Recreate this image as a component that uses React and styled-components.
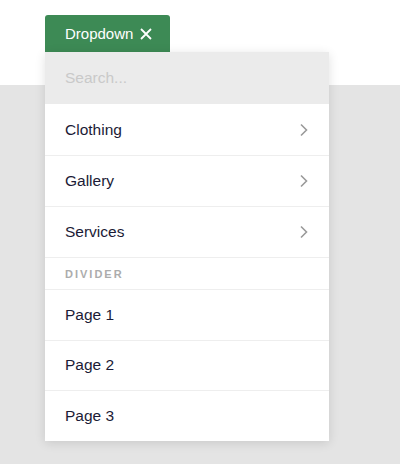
import React from 'react';
import styled, { createGlobalStyle } from 'styled-components';

const GlobalStyle = createGlobalStyle`
  html, body {
    margin: 0;
    padding: 0;
    background: #ffffff;
    font-family: "Liberation Sans", Arial, Helvetica, sans-serif;
  }
`;

const Page = styled.div`
  width: 400px;
  height: 464px;
  position: relative;
  overflow: hidden;
  background: linear-gradient(#ffffff 0, #ffffff 85px, #e4e4e4 85px);
`;

const Wrap = styled.div`
  padding: 15px 0 0 45px;
  display: flex;
  flex-direction: column;
  align-items: flex-start;
`;

const Toggle = styled.button`
  height: 37px;
  padding: 0 18px 0 20px;
  border: none;
  border-radius: 3px 3px 0 0;
  background: #3d8a55;
  color: #ffffff;
  font-family: "Liberation Sans", Arial, sans-serif;
  font-size: 15px;
  display: flex;
  align-items: center;
  gap: 7px;
  cursor: pointer;
`;

const Menu = styled.div`
  width: 284px;
  background: #ffffff;
  box-shadow: 0 2px 10px rgba(0, 0, 0, 0.12);
  display: flex;
  flex-direction: column;
`;

const Search = styled.input`
  height: 52px;
  box-sizing: border-box;
  border: none;
  outline: none;
  background: #ebebeb;
  padding: 0 20px;
  font-family: "Liberation Sans", Arial, sans-serif;
  font-size: 15.5px;
  color: #333;

  &::placeholder {
    color: #c9c9c9;
  }
`;

const Item = styled.div`
  height: ${(p) => (p.$short ? '50.5px' : '51px')};
  box-sizing: border-box;
  padding: 0 20px;
  display: flex;
  align-items: center;
  justify-content: space-between;
  font-size: 15.5px;
  color: #1b1b36;
  border-top: ${(p) => (p.$first ? 'none' : '1px solid #eeeeee')};
`;

const Divider = styled.div`
  height: 32px;
  box-sizing: border-box;
  padding: 0 20px;
  display: flex;
  align-items: center;
  border-top: 1px solid #eeeeee;
  font-size: 11px;
  font-weight: 700;
  letter-spacing: 2px;
  color: #acacac;
`;

const Chevron = () => (
  <svg width="10" height="14" viewBox="0 0 10 14" fill="none">
    <path d="M2 1.5 L7.5 7 L2 12.5" stroke="#9a9a9a" strokeWidth="1.6" />
  </svg>
);

const Close = () => (
  <svg width="12" height="12" viewBox="0 0 12 12">
    <path d="M1 1 L11 11 M11 1 L1 11" stroke="#ffffff" strokeWidth="1.8" />
  </svg>
);

const nested = ['Clothing', 'Gallery', 'Services'];
const pages = ['Page 1', 'Page 2', 'Page 3'];

export default function App() {
  return (
    <Page>
      <GlobalStyle />
      <Wrap>
        <Toggle>
          Dropdown <Close />
        </Toggle>
        <Menu>
          <Search placeholder="Search..." />
          {nested.map((label, i) => (
            <Item key={label} $first={i === 0}>
              {label}
              <Chevron />
            </Item>
          ))}
          <Divider>DIVIDER</Divider>
          {pages.map((label) => (
            <Item key={label} $short>{label}</Item>
          ))}
        </Menu>
      </Wrap>
    </Page>
  );
}
